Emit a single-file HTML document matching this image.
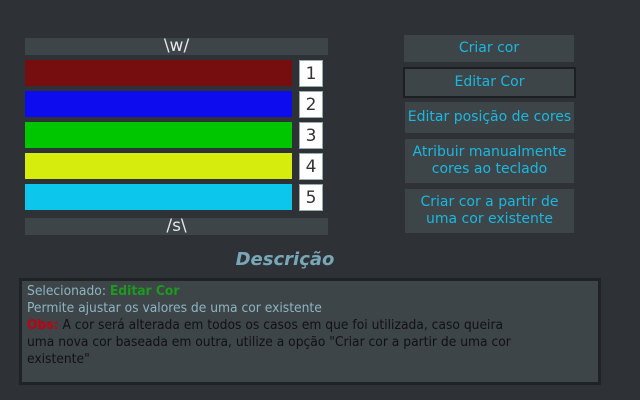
<!DOCTYPE html>
<html><head><meta charset="utf-8"><style>
*{margin:0;padding:0;box-sizing:border-box}
body{width:640px;height:400px;background:#2e3236;position:relative;overflow:hidden;font-family:"DejaVu Sans","Liberation Sans",sans-serif;}
.a{position:absolute}
.bar{background:#3e4548;color:#e6e6e6;text-align:center;font-size:17px;line-height:17px}
.c{left:25px;width:267px;height:26px}
.n{left:299px;width:24px;height:27px;background:#fff;border:1px solid #9aa;color:#333;font-size:17px;text-align:center;line-height:26px}
.b{background:#3e4548;color:#1ab8e0;font-size:14px;text-align:center;display:flex;align-items:center;justify-content:center;line-height:17px}
.t{font-family:"DejaVu Sans Condensed","DejaVu Sans",sans-serif;font-stretch:condensed;font-size:13.7px;line-height:17px;white-space:nowrap}
</style></head><body>
<div class="a bar" style="left:25px;top:38px;width:303px;height:17px">\w/</div>
<div class="a c" style="top:60px;background:#760e10"></div>
<div class="a c" style="top:91px;background:#0c0cee"></div>
<div class="a c" style="top:122px;background:#00c600"></div>
<div class="a c" style="top:153px;background:#d6ec0c"></div>
<div class="a c" style="top:184px;background:#0cc6ec"></div>
<div class="a n" style="top:60px">1</div>
<div class="a n" style="top:91px">2</div>
<div class="a n" style="top:122px">3</div>
<div class="a n" style="top:153px">4</div>
<div class="a n" style="top:184px">5</div>
<div class="a bar" style="left:25px;top:218px;width:303px;height:17px">/s\</div>

<div class="a b" style="left:404px;top:35px;width:170px;height:27px">Criar cor</div>
<div class="a b" style="left:403px;top:67px;width:173px;height:31px;border:2px solid #1c2022">Editar Cor</div>
<div class="a b" style="left:405px;top:102px;width:169px;height:31px">Editar posição de cores</div>
<div class="a b" style="left:405px;top:139px;width:169px;height:44px">Atribuir manualmente<br>cores ao teclado</div>
<div class="a b" style="left:405px;top:189px;width:169px;height:44px">Criar cor a partir de<br>uma cor existente</div>

<div class="a" style="left:0;width:570px;top:249px;text-align:center;color:#78a8b8;font-size:18px;font-weight:bold;font-style:italic">Descrição</div>
<div class="a" style="left:19px;top:278px;width:582px;height:107px;background:#3d4549;border:3px solid #1f2326"></div>
<div class="a t" style="left:27px;top:283px;color:#8fb4c0">Selecionado: <b style="color:#1c9a1c">Editar Cor</b></div>
<div class="a t" style="left:27px;top:300px;color:#8fb4c0">Permite ajustar os valores de uma cor existente</div>
<div class="a t" style="left:27px;top:317px;color:#111"><b style="color:#c00010">Obs:</b> A cor será alterada em todos os casos em que foi utilizada, caso queira</div>
<div class="a t" style="left:27px;top:334px;color:#111">uma nova cor baseada em outra, utilize a opção "Criar cor a partir de uma cor</div>
<div class="a t" style="left:27px;top:351px;color:#111">existente"</div>
</body></html>
